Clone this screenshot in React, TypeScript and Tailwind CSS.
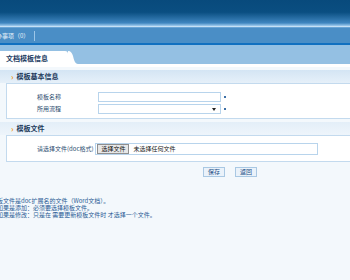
import React from 'react';

const font = "font-['Noto_Sans_CJK_SC','Noto_Sans',sans-serif]";

function SectionTitle({ title, className }: { title: string; className: string }) {
  return (
    <div className={`flex h-[13px] items-center pl-[11px] ${className}`}>
      <span className="mr-[3px] text-[8px] font-bold leading-none text-[#f29b1d]">›</span>
      <span className="text-[7px] font-bold leading-none text-[#1d3a5c]">{title}</span>
    </div>
  );
}

function Marker() {
  return <span className="ml-[3px] inline-block h-[2px] w-[2px] bg-[#3c6fa6]" />;
}

export default function App() {
  return (
    <div className={`h-[280px] w-[350px] overflow-hidden bg-[#f3f8fc] ${font}`}>
      {/* top banner */}
      <div className="h-[27px] bg-[linear-gradient(to_bottom,#084a7c_0%,#0a4e81_45%,#3f86c0_85%,#9fcbee_96%,#e6f3fc_100%)]" />
      <div className="flex h-[16px] items-center border-t border-[#6aa5d6] bg-[#4a8ec6]">
        <span className="ml-[-4px] text-[6px] leading-none text-[#e8f2fa]">办事项（0）</span>
        <span className="ml-[5px] h-[10px] w-px bg-[#9cc6e8]" />
      </div>
      <div className="h-[2px] bg-[#1170c0]" />
      <div className="flex h-[19px] items-end bg-[#94c0e3]">
        <div className="flex h-[13px] w-[68px] items-center rounded-tr-[3px] bg-white pl-[6px] pt-[2px]">
          <span className="text-[7px] font-bold leading-none text-[#1b3b62]">文档模板信息</span>
        </div>
        <svg width="10" height="13" viewBox="0 0 10 13" className="block">
          <path d="M0 0 C3 0 4 2 5 5 C6 9 7 13 10 13 L0 13 Z" fill="#ffffff" />
        </svg>
      </div>
      <div className="h-[3px] bg-white" />

      {/* section 1 */}
      <div className="mt-[3px]">
        <SectionTitle title="模板基本信息" className="bg-[linear-gradient(to_bottom,#d4e5f4,#e6f0f9)]" />
        <div className="ml-[6px] h-[36px] w-[360px] border border-[#c3daee] bg-white pt-[8px]">
          <div className="flex h-[10px] items-center">
            <span className="ml-[30px] w-[25px] text-[6px] leading-none text-[#2b4c6f]">模板名称</span>
            <div className="ml-[36px] h-[10px] w-[123px] border border-[#b8d4ec] bg-white" />
            <Marker />
          </div>
          <div className="mt-[2px] flex h-[10px] items-center">
            <span className="ml-[30px] w-[25px] text-[6px] leading-none text-[#2b4c6f]">所用流程</span>
            <div className="ml-[36px] flex h-[10px] w-[123px] items-center justify-end border border-[#b8d4ec] bg-white pr-[4px]">
              <svg width="4" height="3" viewBox="0 0 4 3" className="block">
                <path d="M0 0 L4 0 L2 3 Z" fill="#222222" />
              </svg>
            </div>
            <Marker />
          </div>
        </div>
      </div>

      {/* section 2 */}
      <div className="mt-[3px]">
        <SectionTitle title="模板文件" className="bg-[linear-gradient(to_bottom,#e3eef8,#eef5fb)]" />
        <div className="ml-[6px] flex h-[27px] w-[360px] items-center border border-[#c3daee] bg-white">
          <span className="ml-[30px] text-[6px] leading-none text-[#2b4c6f]">请选择文件(doc格式)</span>
          <div className="ml-[2px] flex h-[12px] w-[223px] items-center border border-[#b8d4ec] bg-white pl-[1px]">
            <span className="flex h-[10px] w-[32px] items-center justify-center border border-[#8f8f8f] bg-[#e7e7e7] text-[6px] leading-none text-[#111]">
              选择文件
            </span>
            <span className="ml-[4px] text-[6px] leading-none text-[#222]">未选择任何文件</span>
          </div>
        </div>
      </div>

      {/* buttons */}
      <div className="mt-[5px] flex pl-[203px]">
        <span className="flex h-[10px] w-[22px] items-center justify-center border border-[#a9c8e3] bg-[#eaf2fa] text-[6px] leading-none text-[#1d4f86]">
          保存
        </span>
        <span className="ml-[10px] flex h-[10px] w-[22px] items-center justify-center border border-[#a9c8e3] bg-[#eaf2fa] text-[6px] leading-none text-[#1d4f86]">
          返回
        </span>
      </div>

      {/* notes */}
      <div className="mt-[21px] flex flex-col gap-[1px] text-[6px] leading-[6px] text-[#2a5b95]">
        <div className="ml-[-3px]">板文件是doc扩展名的文件（Word文档）。</div>
        <div className="ml-[-3px]">如果是添加：必须要选择模板文件。</div>
        <div className="ml-[-3px]">如果是修改：只是在 需要更新模板文件时 才选择一个文件。</div>
      </div>
    </div>
  );
}
